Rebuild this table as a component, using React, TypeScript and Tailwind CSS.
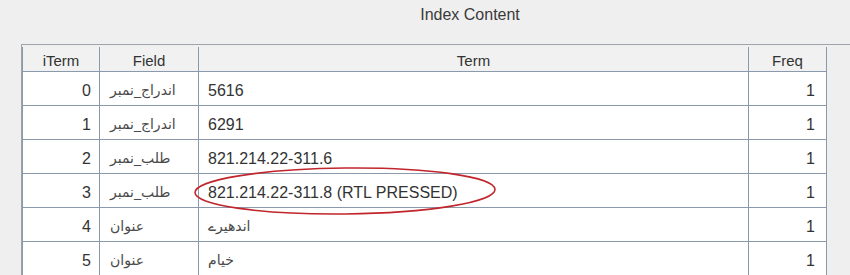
import React from "react"

interface IndexRow {
  iterm: number
  field: string
  term: string
  freq: number
  urduTerm?: boolean
}

const rows: IndexRow[] = [
  { iterm: 0, field: "اندراج_نمبر", term: "5616", freq: 1 },
  { iterm: 1, field: "اندراج_نمبر", term: "6291", freq: 1 },
  { iterm: 2, field: "طلب_نمبر", term: "821.214.22-311.6", freq: 1 },
  { iterm: 3, field: "طلب_نمبر", term: "821.214.22-311.8 (RTL PRESSED)", freq: 1 },
  { iterm: 4, field: "عنوان", term: "اندھیرے", freq: 1, urduTerm: true },
  { iterm: 5, field: "عنوان", term: "خیام", freq: 1, urduTerm: true },
]

const urdu = "font-['DejaVu_Sans',sans-serif] text-[14px] text-[#4a4a4a]"

const App: React.FC = () => {
  return (
    <div className="relative w-[850px] h-[275px] overflow-hidden bg-[#efefef] font-['Liberation_Sans',Arial,sans-serif] text-[#333]">
      {/* title */}
      <div className="h-[44px] flex justify-center pt-[3px] pl-[90px] text-[16px] text-[#3a3a3a]">Index Content</div>

      {/* scroll pane */}
      <div className="ml-[21px] h-[231px] border-l border-t border-[#9fa4aa] pt-[2px]">
        <div className="w-[805px] border-l border-[#8a99ab]">
          {/* header */}
          <div className="grid grid-cols-[77px_99px_550px_78px] h-[25px] border-b border-[#8a99ab] bg-[#f1f1f1] text-[15px]">
            <div className="border-r border-[#8a99ab] flex justify-center pt-[3px]">iTerm</div>
            <div className="border-r border-[#8a99ab] flex justify-center pt-[3px]">Field</div>
            <div className="border-r border-[#8a99ab] flex justify-center pt-[3px]">Term</div>
            <div className="border-r border-[#8a99ab] flex justify-center pt-[3px]">Freq</div>
          </div>

          {/* body */}
          {rows.map((row) => (
            <div
              key={row.iterm}
              className="grid grid-cols-[77px_99px_550px_78px] h-[34px] border-b border-[#8a99ab] bg-white text-[16px]"
            >
              <div className="border-r border-[#8a99ab] flex items-center justify-end pr-[8px] pt-[4px]">{row.iterm}</div>
              <div className={`border-r border-[#8a99ab] flex items-center pl-[10px] pt-[3px] ${urdu}`}>{row.field}</div>
              <div
                className={
                  row.urduTerm
                    ? `border-r border-[#8a99ab] flex items-center pl-[9px] pt-[3px] ${urdu}`
                    : "border-r border-[#8a99ab] flex items-center pl-[9px] pt-[4px]"
                }
              >
                {row.term}
              </div>
              <div className="border-r border-[#8a99ab] flex items-center justify-end pr-[11px] pt-[4px]">{row.freq}</div>
            </div>
          ))}
        </div>
      </div>

      {/* red annotation ellipse */}
      <svg className="absolute left-[190px] top-[162px]" width="312" height="58" viewBox="0 0 312 58">
        <ellipse
          cx="155"
          cy="29"
          rx="150"
          ry="23"
          fill="none"
          stroke="#c0262c"
          strokeWidth="1.6"
          transform="rotate(-0.6 155 29)"
        />
      </svg>
    </div>
  )
}

export default App
